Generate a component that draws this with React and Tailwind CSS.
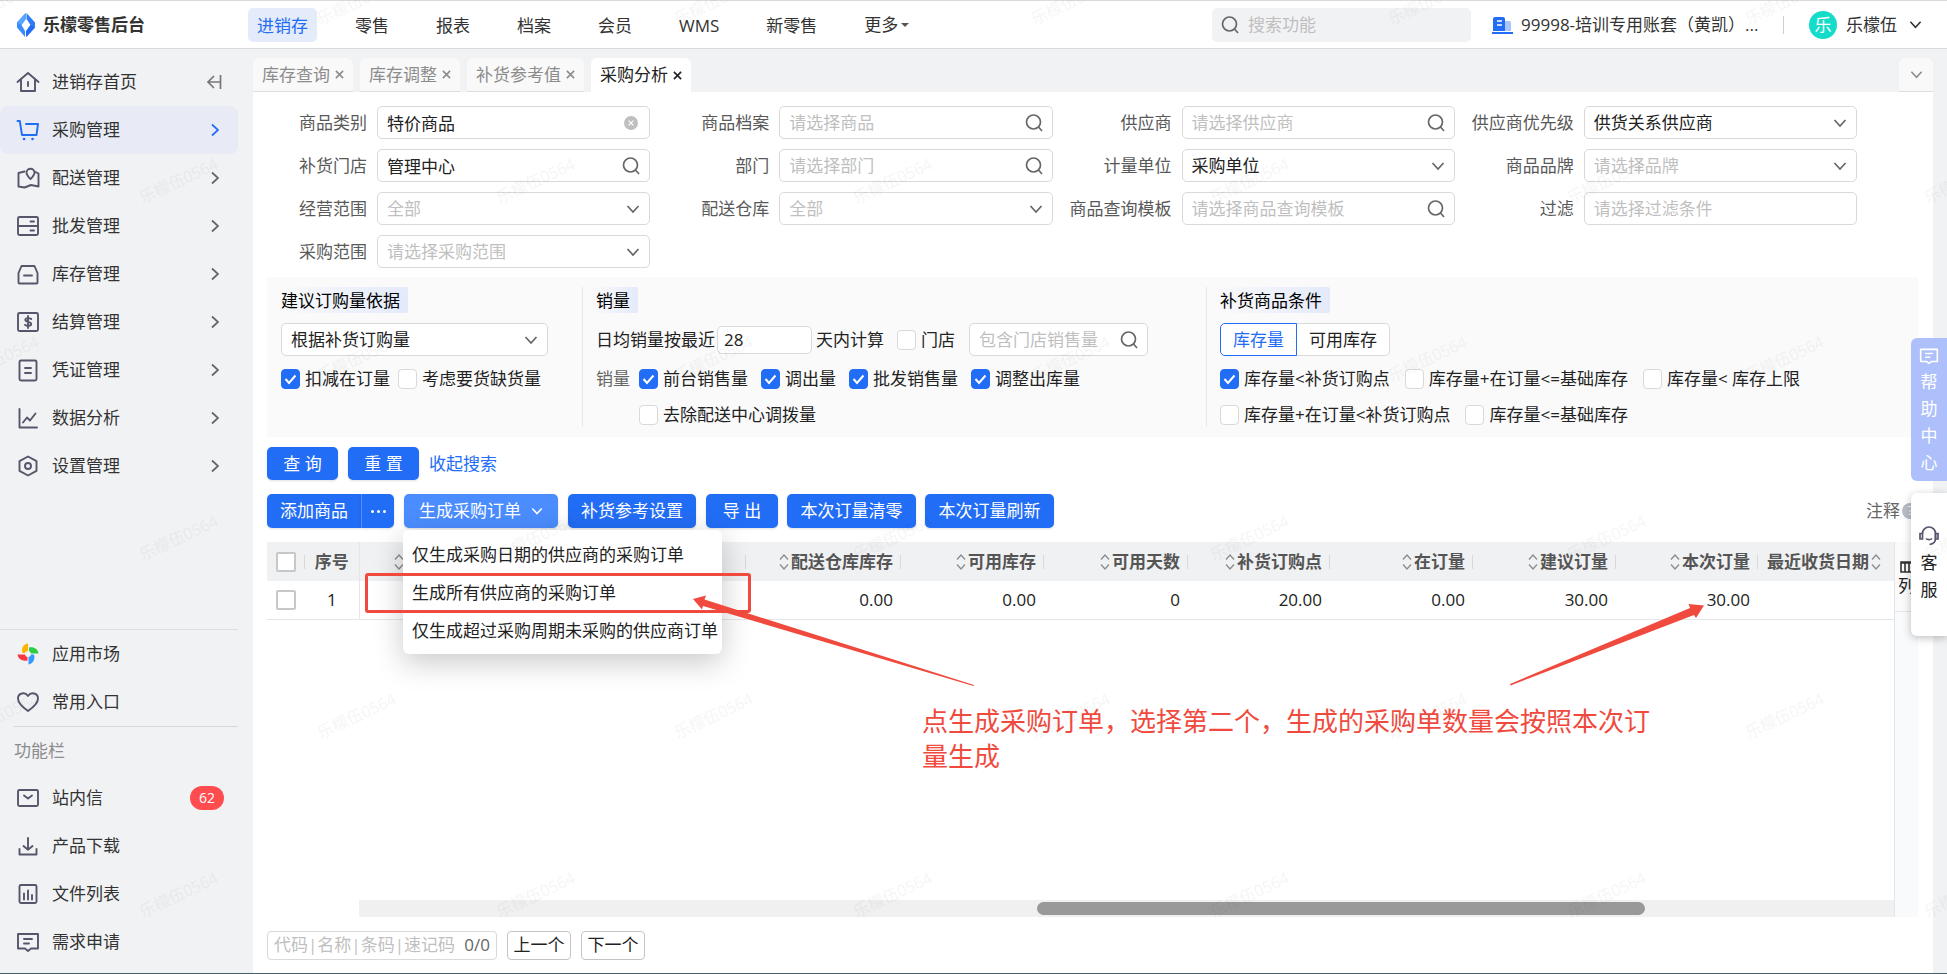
import { useState } from "react";
import clsx from "clsx";

const NAV = ["进销存", "零售", "报表", "档案", "会员", "WMS", "新零售"];

const MENU = [
  { name: "进销存首页", icon: "home" },
  { name: "采购管理", icon: "cart" },
  { name: "配送管理", icon: "map" },
  { name: "批发管理", icon: "drawer" },
  { name: "库存管理", icon: "stock" },
  { name: "结算管理", icon: "money" },
  { name: "凭证管理", icon: "voucher" },
  { name: "数据分析", icon: "chart" },
  { name: "设置管理", icon: "setting" },
];

const TOOLS = [
  { name: "站内信", icon: "mail", badge: 62 },
  { name: "产品下载", icon: "download" },
  { name: "文件列表", icon: "files" },
  { name: "需求申请", icon: "comment" },
];

const TABS = ["库存查询", "库存调整", "补货参考值", "采购分析"];

const FIELDS = [
  { label: "商品类别", type: "clear", value: "特价商品" },
  { label: "商品档案", type: "search", placeholder: "请选择商品" },
  { label: "供应商", type: "search", placeholder: "请选择供应商" },
  { label: "供应商优先级", type: "select", value: "供货关系供应商" },
  { label: "补货门店", type: "search", value: "管理中心" },
  { label: "部门", type: "search", placeholder: "请选择部门" },
  { label: "计量单位", type: "select", value: "采购单位" },
  { label: "商品品牌", type: "select", placeholder: "请选择品牌" },
  { label: "经营范围", type: "select", placeholder: "全部" },
  { label: "配送仓库", type: "select", placeholder: "全部" },
  { label: "商品查询模板", type: "search", placeholder: "请选择商品查询模板" },
  { label: "过滤", type: "text", placeholder: "请选择过滤条件" },
  { label: "采购范围", type: "select", placeholder: "请选择采购范围" },
];

const COLUMNS = [
  { name: "配送仓库库存", value: "0.00" },
  { name: "可用库存", value: "0.00" },
  { name: "可用天数", value: "0" },
  { name: "补货订购点", value: "20.00" },
  { name: "在订量", value: "0.00" },
  { name: "建议订量", value: "30.00" },
  { name: "本次订量", value: "30.00" },
];

const ORDER_MENU = [
  "仅生成采购日期的供应商的采购订单",
  "生成所有供应商的采购订单",
  "仅生成超过采购周期未采购的供应商订单",
];

const ICONS = {
  home: (
    <>
      <path d="M1.500 12 12 3l10.500 9" />
      <path d="M5 9.500V21h14V9.500M12 12v4" />
    </>
  ),
  cart: (
    <>
      <path d="M1.500 3h2.300l2.200 14h14.500l1.500-11H10" />
      <path d="M8 21h.1M16.500 21h.1" strokeWidth="2.600" />
    </>
  ),
  map: (
    <>
      <path d="M8.500 5.500 2.500 7v13.500l6 1 6.500-2.500 7.500 1.500V7.500L19.500 6" />
      <path d="M14.500 13c-2.500-2.500-4-4.300-4-6.300a4 4 0 0 1 8 0c0 2-1.500 3.800-4 6.300Z" />
    </>
  ),
  drawer: (
    <>
      <rect x="2" y="3" width="20" height="18" rx="1.500" />
      <path d="M2 12h20M14.500 7.500h3.500M14.500 16.500h3.500" />
    </>
  ),
  stock: (
    <>
      <path d="M5.500 4h13l3 7v9.500a1 1 0 0 1-1 1h-17a1 1 0 0 1-1-1V11z" />
      <path d="M8 13.500h8" />
    </>
  ),
  money: (
    <>
      <rect x="2" y="3" width="20" height="18" rx="1.500" />
      <path d="M15.200 9c-1-1-5.700-1.500-5.900.8-.1 2.700 5.900 1.400 5.900 4.200 0 2.300-4.800 2.200-6.200.8M12 6v12" />
    </>
  ),
  voucher: (
    <>
      <rect x="3.500" y="2.500" width="17" height="20" rx="1.500" />
      <path d="M9 10h6M9 15h6" />
    </>
  ),
  chart: (
    <>
      <path d="M3.500 3v18.500H21" />
      <path d="m7 16.500 4-5 3 3 5.500-7" />
    </>
  ),
  setting: (
    <>
      <path d="m12 2.500 8.500 4.700v9.600L12 21.500l-8.500-4.700V7.200z" />
      <circle cx="12" cy="12" r="3" />
    </>
  ),
  heart: <path d="M12 21C7 17.500 2 13.500 2 8.500 2 3 9 1.500 12 6c3-4.500 10-3 10 2.500C22 13.500 17 17.500 12 21Z" />,
  mail: (
    <>
      <rect x="2" y="4" width="20" height="16" rx="1.500" />
      <path d="m8 9.500 4 3 4-3" />
    </>
  ),
  download: (
    <>
      <path d="M12 4v11.500M7.500 12l4.500 3.800 4.500-3.800" />
      <path d="M3.500 15v5.500h17V15" />
    </>
  ),
  files: (
    <>
      <rect x="3.500" y="3" width="17" height="18" rx="1.500" />
      <path d="M8 11.500v6M12 8.500v9M16 13v4.500" />
    </>
  ),
  comment: (
    <>
      <path d="M2 4h20v14.500h-7L12 21l-3-2.500H2z" />
      <path d="M8 9h8M8 13.500h5" />
    </>
  ),
};

function Icon({ name, className }) {
  return (
    <svg
      viewBox="0 0 24 24"
      className={className}
      fill="none"
      stroke="currentColor"
      strokeWidth="1.900"
      strokeLinejoin="round"
      strokeLinecap="round"
    >
      {ICONS[name]}
    </svg>
  );
}

function Chevron({ className }) {
  return (
    <svg viewBox="0 0 14 14" className={className} fill="none" stroke="currentColor" strokeWidth="1.700">
      <path d="M1.500 4 7 10l5.500-6" />
    </svg>
  );
}

function SearchIcon({ className }) {
  return (
    <svg viewBox="0 0 18 18" className={className} fill="none" stroke="currentColor" strokeWidth="1.700">
      <circle cx="8.500" cy="8" r="7" />
      <path d="m13.500 13 3.500 4" />
    </svg>
  );
}

function CloseIcon({ className }) {
  return (
    <svg viewBox="0 0 10 10" className={className} fill="none" stroke="currentColor" strokeWidth="1.800">
      <path d="M1 1l8 8M9 1 1 9" />
    </svg>
  );
}

function SortIcon() {
  return (
    <svg viewBox="0 0 10 16" className="h-4 w-[10px] shrink-0" fill="none" stroke="#8c8c8c" strokeWidth="1.300">
      <path d="M1 5.500 5 1l4 4.500M1 10.500 5 15l4-4.500" />
    </svg>
  );
}

function Check({ label, checked }) {
  return (
    <label className="flex h-5 items-center gap-[5px] whitespace-nowrap">
      <span className="grid h-5 w-[19px]">
        <input
          type="checkbox"
          defaultChecked={checked}
          className="peer col-start-1 row-start-1 appearance-none rounded-[4px] border border-[#d9d9d9] bg-white checked:border-[#226df5] checked:bg-[#226df5]"
        />
        <svg
          viewBox="0 0 19 20"
          className="pointer-events-none invisible col-start-1 row-start-1 peer-checked:visible"
          fill="none"
          stroke="#fff"
          strokeWidth="2"
        >
          <path d="m4.500 10 3.500 4 6.500-7.500" />
        </svg>
      </span>
      {label}
    </label>
  );
}

function BoxCheck({ label }) {
  return (
    <input
      type="checkbox"
      aria-label={label}
      className="block h-5 w-5 appearance-none rounded-[2px] border-2 border-[#c8c8c8] bg-white"
    />
  );
}

function Field({ label, type, value, placeholder }) {
  return (
    <label className="flex h-[33px] items-center gap-[10px]">
      <span className="w-[107px] shrink-0 text-right whitespace-nowrap text-[#595959]">{label}</span>
      <span className="flex h-full min-w-0 flex-1 items-center rounded-[5px] border border-[#d9d9d9] bg-white pr-[9px] pl-[9px]">
        {type === "select" ? (
          <select
            className={clsx("h-full min-w-0 flex-1 appearance-none", value ? "text-[#222]" : "text-[#bfbfbf]")}
          >
            <option>{value || placeholder}</option>
          </select>
        ) : (
          <input
            type="text"
            defaultValue={value}
            placeholder={placeholder}
            className="h-full min-w-0 flex-1 text-[#222] placeholder:text-[#bfbfbf]"
          />
        )}
        {type === "select" && <Chevron className="h-[14px] w-[14px] text-[#666]" />}
        {type === "search" && <SearchIcon className="h-[18px] w-[18px] text-[#666]" />}
        {type === "clear" && (
          <span className="mr-[2px] flex h-[14px] w-[14px] items-center justify-center rounded-full bg-[#bfbfbf]">
            <CloseIcon className="h-[6px] w-[6px] text-white" />
          </span>
        )}
      </span>
    </label>
  );
}

function Tag({ children }) {
  return (
    <h3 className="-ml-1 h-[26px] self-start rounded-[2px] bg-linear-to-r from-[#fafafa] to-[#e4eafa] pr-2 pl-1 leading-[28px] text-black">
      {children}
    </h3>
  );
}

function PrimaryButton({ children, className }) {
  return (
    <button className={clsx("rounded-[5px] bg-[#226df5] text-white shadow-sm", className)}>{children}</button>
  );
}

function Header() {
  return (
    <header className="flex h-[49px] items-center border-y border-[#d9dadb] bg-white pr-[25px]">
      <div className="flex w-[248px] shrink-0 items-center gap-2 pl-[17px]">
        <svg viewBox="0 0 18 24" className="h-6 w-[18px]">
          <path d="M8.500 0v6L4.500 12 8 18v6L0 14.500v-5z" fill="#3b8bfa" />
          <path d="M9.500 0 18 9.500v5L9.500 24v-6l4-6-4-6z" fill="#2f7df6" />
          <path d="M9 0v6l-4.500 6L0 9.500z" fill="#57a5ff" />
          <path d="M9 24v-6l4.500-6 4.500 2.500z" fill="#226df5" />
        </svg>
        <span className="text-[17px] leading-[26px] font-bold text-[#333]">乐檬零售后台</span>
      </div>
      <nav className="flex gap-[29px]">
        {NAV.map((name, i) => (
          <a
            key={name}
            href="#"
            className={clsx(
              "h-[34px] rounded-[5px] px-[9px] leading-[36px] whitespace-nowrap",
              i === 0 ? "bg-[#e4ebfb] text-[#226df5]" : "text-[#333]"
            )}
          >
            {name}
          </a>
        ))}
        <a href="#" className="flex h-[34px] items-center gap-[3px] px-[9px] leading-[36px] whitespace-nowrap text-[#333]">
          更多
          <span className="border-x-4 border-t-4 border-x-transparent border-t-[#555]"></span>
        </a>
      </nav>
      <label className="ml-auto flex h-[34px] w-[259px] items-center gap-[9px] rounded-[5px] bg-[#f1f2f4] pl-[9px]">
        <SearchIcon className="h-[18px] w-[18px] shrink-0 text-[#666]" />
        <input type="text" aria-label="搜索功能" placeholder="搜索功能" className="w-full placeholder:text-[#bfbfbf]" />
      </label>
      <svg viewBox="0 0 21 18" className="ml-[21px] h-[18px] w-[21px] shrink-0">
        <path d="M13 5h4.500a1.500 1.500 0 0 1 1.500 1.500V15h-6z" fill="#a9c6fb" />
        <path d="M1 15V3a2 2 0 0 1 2-2h8a2 2 0 0 1 2 2v12z" fill="#226df5" />
        <path d="M0 16h21v2H0z" fill="#226df5" />
        <path d="M5 5h5M5 9h5" stroke="#fff" strokeWidth="1.500" />
      </svg>
      <span className="ml-2 w-[240px] leading-[26px] whitespace-nowrap text-[#333]">
        99998-培训专用账套（黄凯）...
      </span>
      <span className="ml-[22px] h-[18px] w-px bg-[#cfcfcf]"></span>
      <button className="ml-[25px] flex items-center text-[#333]">
        <span className="h-7 w-7 rounded-full bg-[#13dccb] leading-7 text-white">乐</span>
        <span className="mr-3 ml-[9px]">乐檬伍</span>
        <Chevron className="h-[13px] w-[13px]" />
      </button>
    </header>
  );
}

function MenuItem({ name, icon, active, first, badge, plain }) {
  return (
    <a
      href="#"
      className={clsx(
        "mr-[15px] flex h-12 items-center rounded-[8px] pr-[14px] pl-4 text-[#333]",
        active && "bg-[#e8ebf5] text-[#226df5]"
      )}
    >
      {icon === "market" ? (
        <svg viewBox="0 0 24 24" className="h-6 w-6">
          <path d="M12 1.500V9a3 3 0 0 0-3 2H6.500C5 6 7.500 2 12 1.500Z" fill="#ffb300" />
          <path d="M13 5.500c5-1 9 1.500 9.500 6H15a3 3 0 0 0-2-2.500z" fill="#2ecc40" />
          <path d="M1.500 12.500H9a3 3 0 0 0 2.500 2.500v3.500c-5 1-9.500-1.500-10-6Z" fill="#fb3640" />
          <path d="M15 12.500h3c1.500 5-1 9-5.500 10V15a3 3 0 0 0 2.500-2.500z" fill="#3399ff" />
        </svg>
      ) : (
        <Icon name={icon} className={clsx("h-6 w-6", active ? "text-[#226df5]" : "text-[#55566b]")} />
      )}
      <span className="ml-3 flex-1">{name}</span>
      {first && (
        <svg viewBox="0 0 16 14" className="mr-[2px] h-[14px] w-4" fill="none" stroke="#777" strokeWidth="1.700">
          <path d="M14.500 0v14M1.500 7h13M8 1 2 7l6 6" />
        </svg>
      )}
      {!first && !plain && (
        <Chevron className={clsx("mr-[2px] h-[14px] w-[14px] -rotate-90", active ? "text-[#226df5]" : "text-[#666]")} />
      )}
      {badge && (
        <span className="h-6 w-[34px] rounded-full bg-[#ff4d4f] text-center text-[14px] leading-6 text-white">
          {badge}
        </span>
      )}
    </a>
  );
}

function Sidebar() {
  return (
    <aside className="flex w-[253px] shrink-0 flex-col pt-[9px] pb-[7px]">
      {MENU.map((m, i) => (
        <MenuItem key={m.name} {...m} first={i === 0} active={i === 1} />
      ))}
      <div className="mr-[15px] flex-1 border-b border-[#dcdee2]"></div>
      <MenuItem name="应用市场" icon="market" plain />
      <MenuItem name="常用入口" icon="heart" plain />
      <div className="mr-[15px] ml-[14px] h-12 border-t border-[#d5d6d8] leading-[47px] text-[#8c8c8c]">功能栏</div>
      {TOOLS.map((m) => (
        <MenuItem key={m.name} {...m} plain />
      ))}
    </aside>
  );
}

function TabBar() {
  return (
    <div className="flex h-[43px] items-end gap-[7px] bg-[#f1f2f4]">
      {TABS.map((name, i) => (
        <div
          key={name}
          className={clsx(
            "flex h-[34px] items-center gap-[5px] rounded-t-[6px] px-[9px]",
            i === 3 ? "bg-white text-[#222]" : "border-b border-[#dcdcdc] bg-[#f9f9f9] text-[#8c8c8c]"
          )}
        >
          {name}
          <button aria-label={"关闭" + name}>
            <CloseIcon className="h-[9px] w-[9px]" />
          </button>
        </div>
      ))}
      <button
        aria-label="更多标签"
        className="ml-auto flex h-[34px] w-[34px] items-center justify-center rounded-t-[6px] border-b border-[#dcdcdc] bg-[#f9f9f9] text-[#8c8c8c]"
      >
        <Chevron className="h-[13px] w-[13px]" />
      </button>
    </div>
  );
}

function Conditions() {
  const [mode, setMode] = useState("库存量");
  return (
    <section className="mr-[15px] ml-[14px] flex bg-[#fafafa] py-[10px] text-[#222]">
      <div className="flex w-[315px] flex-col pr-[34px] pl-[14px]">
        <Tag>建议订购量依据</Tag>
        <div className="mt-[10px] flex h-[33px] items-center rounded-[5px] border border-[#d9d9d9] bg-white px-[9px]">
          <select aria-label="建议订购量依据" className="h-full flex-1 appearance-none">
            <option>根据补货订购量</option>
          </select>
          <Chevron className="h-[14px] w-[14px] text-[#666]" />
        </div>
        <div className="mt-[13px] flex gap-2">
          <Check label="扣减在订量" checked />
          <Check label="考虑要货缺货量" />
        </div>
      </div>
      <div className="flex w-[624px] flex-col border-l border-[#e8e8e8] pl-[13px]">
        <Tag>销量</Tag>
        <div className="mt-[10px] flex h-[33px] items-center">
          <label htmlFor="days">日均销量按最近</label>
          <input
            id="days"
            type="text"
            defaultValue="28"
            className="mr-1 ml-[2px] h-7 w-[95px] rounded-[5px] border border-[#d9d9d9] bg-white px-[6px]"
          />
          <span className="mr-[13px]">天内计算</span>
          <Check label="门店" />
          <label className="ml-[14px] flex h-full w-[179px] items-center rounded-[5px] border border-[#d9d9d9] bg-white px-[9px]">
            <input
              type="text"
              aria-label="包含门店销售量"
              placeholder="包含门店销售量"
              className="min-w-0 flex-1 placeholder:text-[#bfbfbf]"
            />
            <SearchIcon className="h-[18px] w-[18px] text-[#666]" />
          </label>
        </div>
        <div className="mt-[13px] flex gap-[13px]">
          <span className="-mr-1 leading-5 text-[#666]">销量</span>
          <Check label="前台销售量" checked />
          <Check label="调出量" checked />
          <Check label="批发销售量" checked />
          <Check label="调整出库量" checked />
        </div>
        <div className="mt-4 flex pl-[43px]">
          <Check label="去除配送中心调拨量" />
        </div>
      </div>
      <div className="flex flex-1 flex-col border-l border-[#e8e8e8] pb-[2px] pl-[13px]">
        <Tag>补货商品条件</Tag>
        <div className="mt-[10px] flex h-[33px]">
          {["库存量", "可用库存"].map((name, i) => (
            <button
              key={name}
              onClick={() => setMode(name)}
              className={clsx(
                "border bg-white px-3",
                i === 0 ? "rounded-l-[5px]" : "rounded-r-[5px] border-l-0",
                mode === name ? "border-[#226df5] text-[#226df5]" : "border-[#d9d9d9]"
              )}
            >
              {name}
            </button>
          ))}
        </div>
        <div className="mt-[13px] flex gap-[15px]">
          <Check label="库存量<补货订购点" checked />
          <Check label="库存量+在订量<=基础库存" />
          <Check label="库存量< 库存上限" />
        </div>
        <div className="mt-4 flex gap-[15px]">
          <Check label="库存量+在订量<补货订购点" />
          <Check label="库存量<=基础库存" />
        </div>
      </div>
    </section>
  );
}

function Toolbar() {
  return (
    <div className="mt-[14px] flex h-[34px] gap-[10px] pr-[15px] pl-[14px] whitespace-nowrap">
      <div className="flex w-[127px]">
        <PrimaryButton className="flex-1 rounded-r-none">添加商品</PrimaryButton>
        <PrimaryButton className="flex w-[33px] items-center justify-center gap-[3px] rounded-l-none border-l border-[#4d90fe]">
          <span className="h-[3px] w-[3px] rounded-full bg-white"></span>
          <span className="h-[3px] w-[3px] rounded-full bg-white"></span>
          <span className="h-[3px] w-[3px] rounded-full bg-white"></span>
        </PrimaryButton>
      </div>
      <div className="relative">
        <button className="flex h-full w-[154px] items-center justify-center gap-[10px] rounded-[5px] bg-[#4b8dff] text-white shadow-sm">
          生成采购订单
          <Chevron className="h-3 w-3" />
        </button>
        <ul className="absolute top-full -left-px z-10 mt-[2px] rounded-[6px] bg-white pt-[6px] pr-1 pb-1 pl-[9px] text-[#222] shadow-[0_8px_30px_rgba(0,0,0,0.22)]">
          {ORDER_MENU.map((name) => (
            <li key={name}>
              <a href="#" className="block h-[38px] leading-[38px]">
                {name}
              </a>
            </li>
          ))}
        </ul>
      </div>
      <PrimaryButton className="w-[128px]">补货参考设置</PrimaryButton>
      <PrimaryButton className="-mr-px w-[72px]">导 出</PrimaryButton>
      <PrimaryButton className="-mr-px w-[129px]">本次订量清零</PrimaryButton>
      <PrimaryButton className="w-[129px]">本次订量刷新</PrimaryButton>
      <span className="ml-auto flex items-center gap-[2px] text-[#666]">
        注释
        <span className="h-4 w-4 rounded-full bg-[#b8bcc6] text-center text-[12px] leading-4 text-white">?</span>
      </span>
    </div>
  );
}

function DataTable() {
  return (
    <table className="w-full table-fixed border-collapse">
      <colgroup>
        <col className="w-[38px]" />
        <col className="w-[54px]" />
        <col />
        <col className="w-[155px]" />
        <col className="w-[143px]" />
        <col className="w-[144px]" />
        <col className="w-[142px]" />
        <col className="w-[143px]" />
        <col className="w-[143px]" />
        <col className="w-[142px]" />
        <col className="w-[136px]" />
      </colgroup>
      <thead className="bg-[#f0f1f3] text-[#555]">
        <tr className="h-[39px]">
          <th className="p-0">
            <div className="flex items-center justify-between pl-[9px]">
              <BoxCheck label="全选" />
              <span className="h-[14px] w-px bg-[#d9d9d9]"></span>
            </div>
          </th>
          <th className="border-r border-[#e6e6e6] p-0 text-center">序号</th>
          <th className="p-0">
            <div className="flex items-center justify-between pl-[34px]">
              <SortIcon />
              <span className="h-[14px] w-px bg-[#d9d9d9]"></span>
            </div>
          </th>
          {COLUMNS.map((c) => (
            <th key={c.name} className="p-0">
              <div className="flex items-center justify-end gap-[2px] whitespace-nowrap">
                <SortIcon />
                {c.name}
                <span className="ml-[5px] h-[14px] w-px bg-[#d9d9d9]"></span>
              </div>
            </th>
          ))}
          <th className="p-0">
            <div className="flex items-center gap-[2px] pl-[9px] whitespace-nowrap">
              最近收货日期
              <SortIcon />
            </div>
          </th>
        </tr>
      </thead>
      <tbody className="text-[#222]">
        <tr className="h-[38px] border-b border-[#e6e6e6]">
          <td className="p-0 pl-[9px]">
            <BoxCheck label="选择第1行" />
          </td>
          <td className="border-r border-[#e6e6e6] p-0 text-center">1</td>
          <td></td>
          {COLUMNS.map((c) => (
            <td key={c.name} className="p-0 pr-2 text-right">
              {c.value}
            </td>
          ))}
          <td></td>
        </tr>
      </tbody>
    </table>
  );
}

function Annotations() {
  return (
    <>
      <div className="pointer-events-none absolute top-[573px] left-[365px] z-20 h-10 w-[386px] rounded-[3px] border-3 border-[#f04a3e]"></div>
      <svg
        viewBox="0 0 1020 100"
        className="pointer-events-none absolute top-[590px] left-[690px] z-20 h-[100px] w-[1020px]"
        fill="#f04a3e"
      >
        <path d="M3 9 16 5.500l-1.500 4L284 95l-.5 1L13 16l-1 3.500z" />
        <path d="M1014 15.500 998.500 14l1.500 4L820 94l.5 1.500L1004 25l2 3z" />
      </svg>
      <p className="pointer-events-none absolute top-[704px] left-[922px] z-20 w-[740px] text-[26px] leading-[35px] text-[#f04a3e]">
        点生成采购订单，选择第二个，生成的采购单数量会按照本次订
        <br />
        量生成
      </p>
    </>
  );
}

function SideWidgets() {
  return (
    <div className="absolute top-[338px] right-0 z-20 flex w-9 flex-col gap-3">
      <button className="flex h-[143px] flex-col items-center rounded-l-[6px] bg-[#aec0fb] pt-2 text-white">
        <Icon name="comment" className="h-5 w-5" />
        {["帮", "助", "中", "心"].map((c) => (
          <span key={c} className="h-[27px] leading-[32px]">
            {c}
          </span>
        ))}
      </button>
      <button className="flex h-[143px] flex-col items-center justify-center rounded-l-[6px] bg-white text-[#222] shadow-[0_2px_8px_rgba(0,0,0,0.25)]">
        <svg viewBox="0 0 20 20" className="h-5 w-5" fill="none" stroke="#55566b" strokeWidth="1.700">
          <path d="M3.500 7.500a6.500 6.500 0 0 1 13 0v5c0 3-2 5.500-6 6" />
          <path d="M3.500 7.500H1v5.500h2.500zM16.500 7.500H19v5.500h-2.500zM7 12.500c1.500 1.500 4.500 1.500 6 0" />
        </svg>
        <span className="mt-[3px] leading-[27px]">客</span>
        <span className="leading-[27px]">服</span>
      </button>
    </div>
  );
}

function Watermark() {
  const mark = "乐檬伍0564";
  return (
    <svg className="pointer-events-none absolute inset-0 z-30 h-full w-full" aria-hidden="true">
      <defs>
        <pattern id="mark" width="357" height="357" patternUnits="userSpaceOnUse" x="0" y="0">
          <g fill="#000" fillOpacity="0.04" fontSize="16" textAnchor="middle">
            <text transform="translate(181 186) rotate(-25)">{mark}</text>
            <text transform="translate(2 7) rotate(-25)">{mark}</text>
            <text transform="translate(359 7) rotate(-25)">{mark}</text>
            <text transform="translate(2 364) rotate(-25)">{mark}</text>
            <text transform="translate(359 364) rotate(-25)">{mark}</text>
          </g>
        </pattern>
      </defs>
      <rect width="100%" height="100%" fill="url(#mark)" />
    </svg>
  );
}

export default function App() {
  return (
    <div className="relative flex min-h-screen flex-col overflow-hidden border-b border-[#47606b] bg-[#f1f2f4] font-['Open_Sans','Noto_Sans_CJK_SC',sans-serif] text-[17px] leading-[24px]">
      <Header />
      <div className="flex flex-1">
        <Sidebar />
        <main className="mr-[14px] flex min-w-0 flex-1 flex-col bg-white">
          <TabBar />
          <form className="grid grid-cols-4 gap-x-3 gap-y-[10px] pt-[14px] pr-[76px] pb-[9px] pl-[7px]">
            {FIELDS.map((f) => (
              <Field key={f.label} {...f} />
            ))}
          </form>
          <Conditions />
          <div className="mt-[10px] flex h-[33px] items-center gap-[10px] pl-[14px]">
            <PrimaryButton className="h-full w-[71px]">查 询</PrimaryButton>
            <PrimaryButton className="h-full w-[71px]">重 置</PrimaryButton>
            <a href="#" className="text-[#226df5]">
              收起搜索
            </a>
          </div>
          <Toolbar />
          <div className="mt-[14px] mr-[15px] ml-[14px] flex flex-1">
            <div className="flex min-w-0 flex-1 flex-col">
              <DataTable />
              <div className="flex-1"></div>
              <div className="ml-[92px] h-[17px] bg-[#f0f0f0] py-[2px]">
                <div className="ml-[44.2%] h-[13px] w-[39.6%] rounded-full bg-[#999]"></div>
              </div>
            </div>
            <div className="w-6 border-l border-[#e3e5e8] bg-[#f9fafc]">
              <button className="flex h-[70px] w-full flex-col items-center border-b border-[#e3e5e8] bg-[#fafafa] pt-[18px] text-[#222]">
                <svg viewBox="0 0 14 14" className="h-[14px] w-[14px]" fill="none" stroke="#333" strokeWidth="1.600">
                  <path d="M1 2h12v10H1zM5 2v10M9 2v10M1 3h12" />
                </svg>
                <span>列</span>
              </button>
            </div>
          </div>
          <footer className="flex h-14 items-center gap-[10px] pl-[14px] text-[#222]">
            <label className="flex h-[29px] w-[230px] items-center rounded-[4px] border border-[#d9d9d9] px-[6px]">
              <input
                type="text"
                aria-label="代码|名称|条码|速记码"
                placeholder="代码|名称|条码|速记码"
                className="min-w-0 flex-1 placeholder:text-[#bfbfbf]"
              />
              <span className="text-[#666]">0/0</span>
            </label>
            <button className="h-[29px] w-16 rounded-[4px] border border-[#c4c4c4] bg-white">上一个</button>
            <button className="h-[29px] w-16 rounded-[4px] border border-[#c4c4c4] bg-white">下一个</button>
          </footer>
        </main>
      </div>
      <SideWidgets />
      <Annotations />
      <Watermark />
    </div>
  );
}
